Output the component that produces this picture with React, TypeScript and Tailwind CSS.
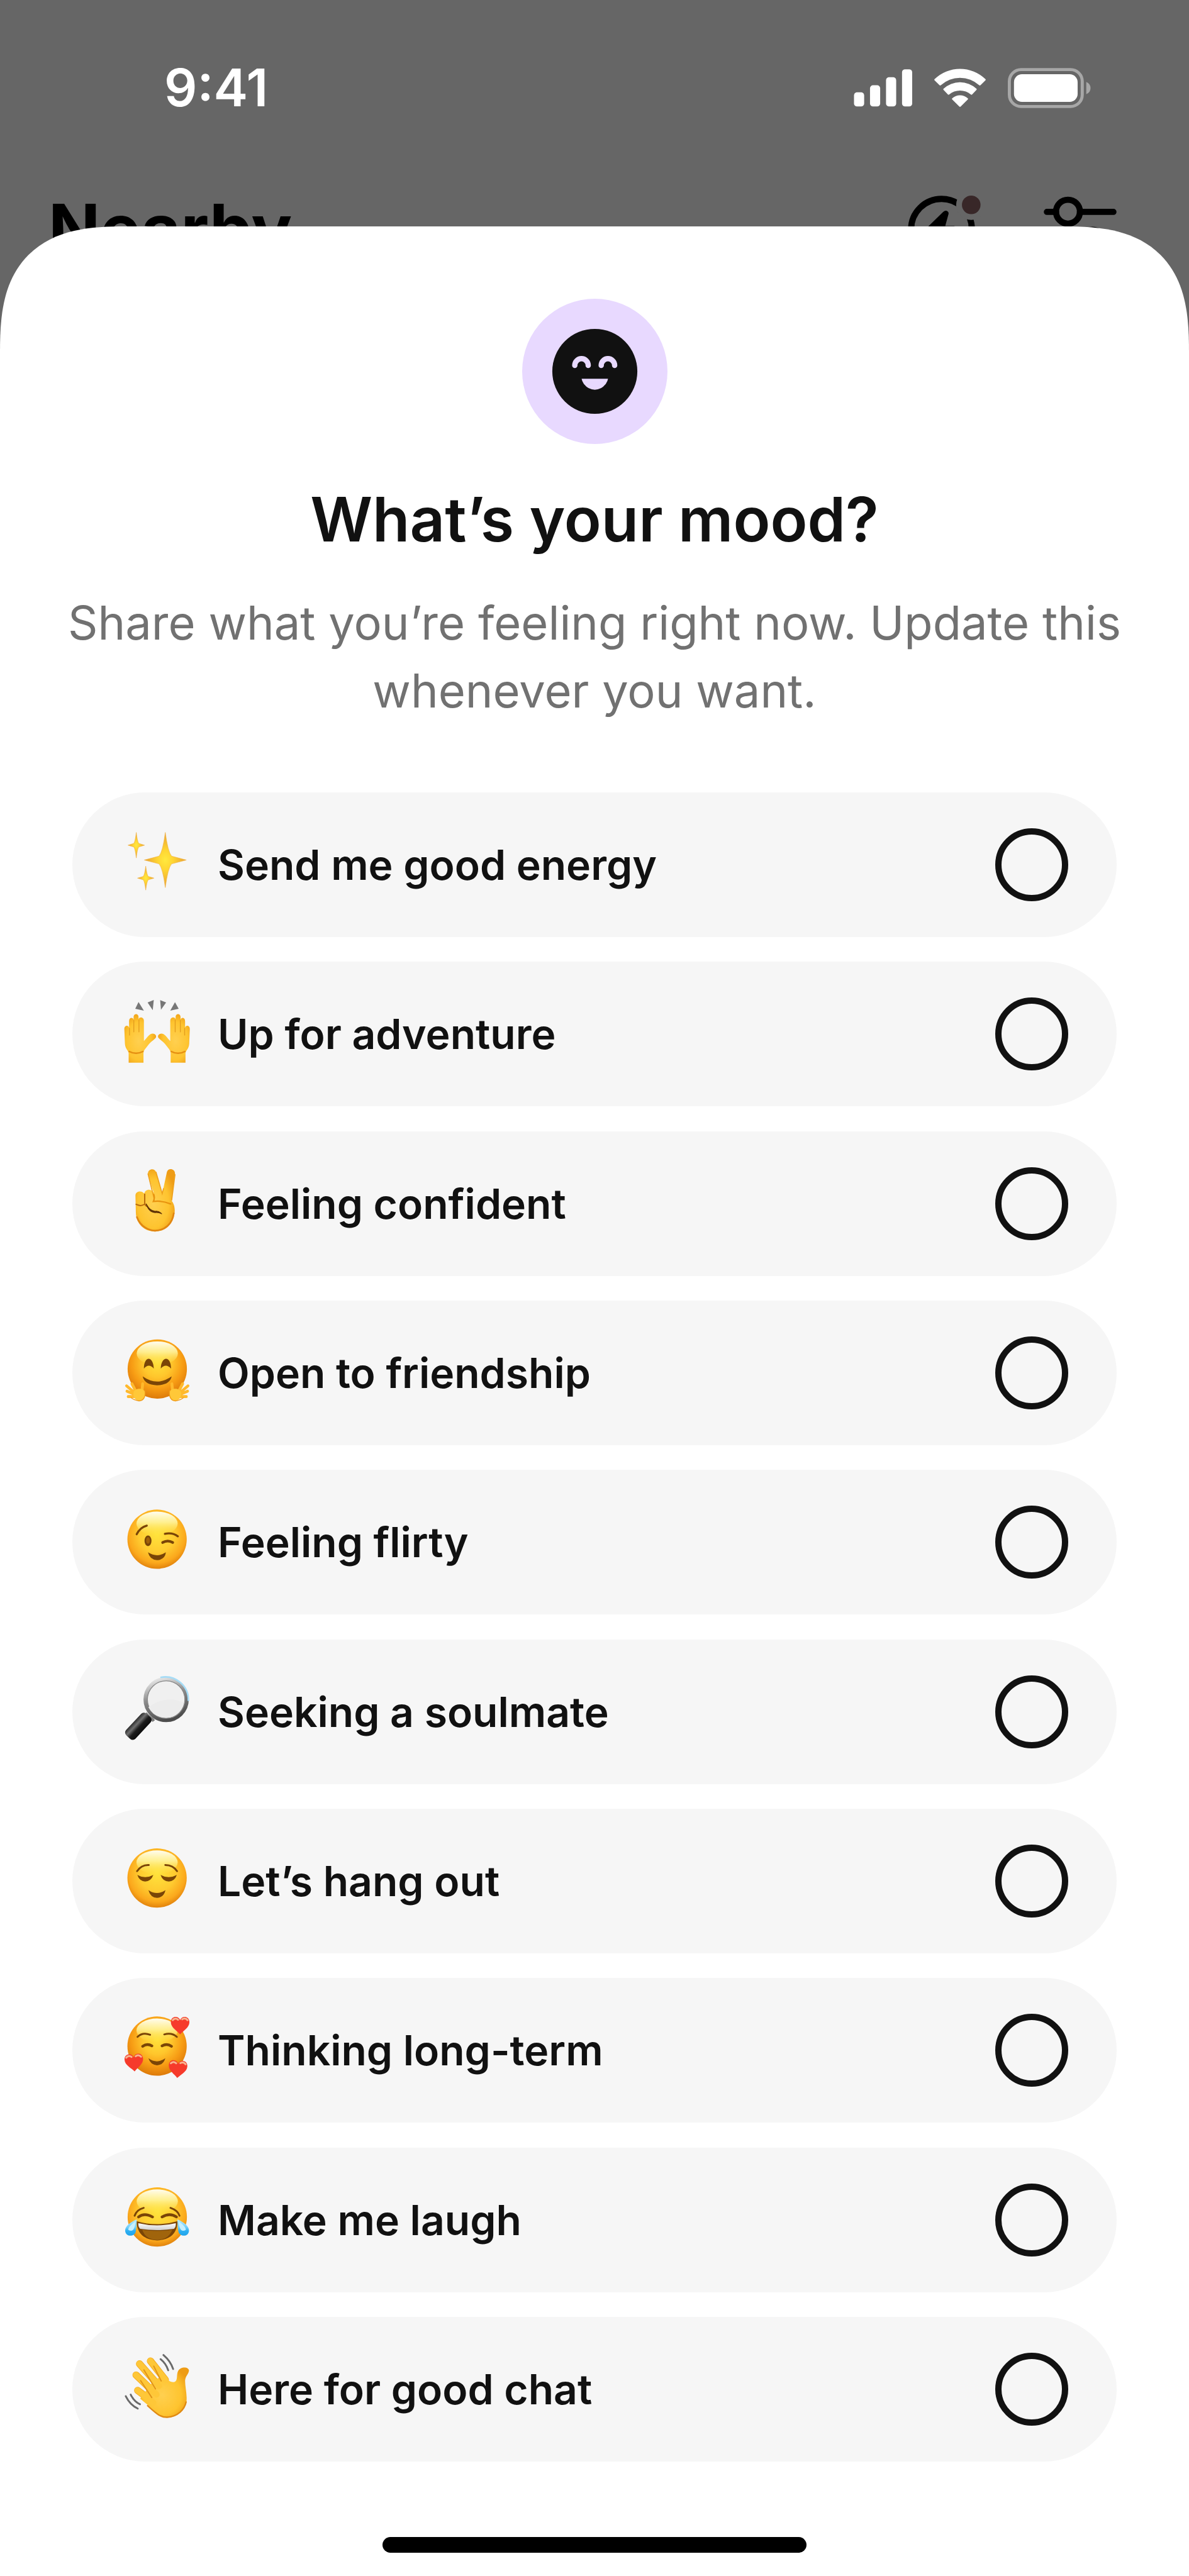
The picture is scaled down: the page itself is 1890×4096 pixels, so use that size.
import type { ReactNode } from 'react';

const BROWN = '#7a4507';

function Gradients() {
  return (
    <svg className="absolute size-0" aria-hidden="true">
      <defs>
        <radialGradient id="face" cx="0.5" cy="0.42" r="0.6">
          <stop offset="0" stopColor="#ffe33c" />
          <stop offset="0.5" stopColor="#ffcb30" />
          <stop offset="0.8" stopColor="#fba81c" />
          <stop offset="1" stopColor="#dd7c0a" />
        </radialGradient>
        <radialGradient id="faceWarm" cx="0.5" cy="0.4" r="0.6">
          <stop offset="0" stopColor="#ffe03a" />
          <stop offset="0.4" stopColor="#ffc62c" />
          <stop offset="0.72" stopColor="#f79c14" />
          <stop offset="1" stopColor="#dd7a0a" />
        </radialGradient>
        <linearGradient id="shine" x1="0" y1="0" x2="0" y2="1">
          <stop offset="0" stopColor="#fffdf0" />
          <stop offset="0.45" stopColor="#fff6a0" stopOpacity="0.85" />
          <stop offset="1" stopColor="#ffea50" stopOpacity="0" />
        </linearGradient>
        <radialGradient id="star" cx="0.5" cy="0.5" r="0.5">
          <stop offset="0" stopColor="#ffe93f" />
          <stop offset="0.35" stopColor="#ffd633" />
          <stop offset="1" stopColor="#e8a032" />
        </radialGradient>
        <radialGradient id="skin" cx="0.45" cy="0.55" r="0.6">
          <stop offset="0" stopColor="#ffd050" />
          <stop offset="0.65" stopColor="#fec42f" />
          <stop offset="1" stopColor="#ee9c16" />
        </radialGradient>
        <linearGradient id="rim" x1="0.2" y1="0" x2="0.5" y2="1">
          <stop offset="0" stopColor="#e9e9e9" />
          <stop offset="0.45" stopColor="#8c8c8c" />
          <stop offset="1" stopColor="#4c4c4c" />
        </linearGradient>
        <linearGradient id="handle" x1="0" y1="0" x2="1" y2="0">
          <stop offset="0" stopColor="#2c2c2c" />
          <stop offset="0.3" stopColor="#6f6f6f" />
          <stop offset="0.6" stopColor="#1c1c1c" />
          <stop offset="1" stopColor="#0c0c0c" />
        </linearGradient>
        <linearGradient id="tear" x1="0.5" y1="0" x2="0.5" y2="1">
          <stop offset="0" stopColor="#b9ebff" />
          <stop offset="0.5" stopColor="#6fcdfa" />
          <stop offset="0.7" stopColor="#2fb0f2" />
          <stop offset="1" stopColor="#1fa3ea" />
        </linearGradient>
        <linearGradient id="teeth" x1="0" y1="0" x2="0" y2="1">
          <stop offset="0" stopColor="#ffffff" />
          <stop offset="1" stopColor="#cfcfcf" />
        </linearGradient>
      </defs>
    </svg>
  );
}

function Emoji({ y, children }: { y: number; children: ReactNode }) {
  return (
    <svg viewBox={`58 ${y} 330 330`} className="size-[108px] shrink-0 overflow-visible" aria-hidden="true">
      {children}
    </svg>
  );
}

function Face({ cx, cy, warm }: { cx: number; cy: number; warm?: boolean }) {
  return (
    <>
      <circle cx={cx} cy={cy} r="144" fill={warm ? 'url(#faceWarm)' : 'url(#face)'} />
      <ellipse cx={cx} cy={cy - 76} rx="100" ry="58" fill="url(#shine)" />
    </>
  );
}

function Heart({ x, y, rotate }: { x: number; y: number; rotate: number }) {
  return (
    <g transform={`translate(${x} ${y}) rotate(${rotate})`}>
      <path
        d="M0 45C-14 28-45 12-45-14C-45-32-34-40-22-40C-11-40-3-34 0-24C3-34 11-40 22-40C34-40 45-32 45-14C45 12 14 28 0 45Z"
        fill="#f63a2b"
      />
      <path d="M-36-24Q-24-38-10-26M10-28Q24-38 36-24" fill="none" stroke="#f7b58f" strokeWidth="9" strokeLinecap="round" />
    </g>
  );
}

function Sparkle({ cx, cy, rx, ry }: { cx: number; cy: number; rx: number; ry: number }) {
  return (
    <path
      d={`M${cx} ${cy - ry}Q${cx + rx * 0.12} ${cy - ry * 0.3} ${cx + rx * 0.3} ${cy - ry * 0.14}L${cx + rx} ${cy}L${cx + rx * 0.3} ${cy + ry * 0.14}Q${cx + rx * 0.12} ${cy + ry * 0.3} ${cx} ${cy + ry}Q${cx - rx * 0.12} ${cy + ry * 0.3} ${cx - rx * 0.3} ${cy + ry * 0.14}L${cx - rx} ${cy}L${cx - rx * 0.3} ${cy - ry * 0.14}Q${cx - rx * 0.12} ${cy - ry * 0.3} ${cx} ${cy - ry}Z`}
      fill="url(#star)"
      stroke="#f0b040"
      strokeWidth="2"
      strokeLinejoin="round"
    />
  );
}

function RaisedHand() {
  return (
    <>
      <path
        d="M84 1252V1206C84 1194 68 1186 66 1160L63 1088C63 1068 84 1068 86 1082V1050C86 1030 106 1030 108 1044V1028C110 1012 130 1012 132 1028V1042C134 1028 156 1028 158 1046V1146C166 1140 180 1118 192 1112C208 1106 222 1118 216 1130C206 1142 190 1150 176 1170C164 1186 156 1192 156 1206V1252Z"
        fill="url(#skin)"
      />
      <path d="M88 1084V1118M109 1046V1102M134 1044V1102" fill="none" stroke="#e39c1e" strokeWidth="4" strokeLinecap="round" />
      <path d="M84 1196Q120 1216 156 1196" fill="none" stroke="#e58f12" strokeWidth="7" />
    </>
  );
}

const emoji: Record<string, ReactNode> = {
  sparkles: (
    <Emoji y={126}>
      <Sparkle cx={262} cy={268} rx={102} ry={134} />
      <Sparkle cx={121} cy={196} rx={40} ry={62} />
      <Sparkle cx={167} cy={356} rx={40} ry={58} />
    </Emoji>
  ),
  hands: (
    <Emoji y={947}>
      <path d="M132 957L158 999L116 990ZM206 947L201 997L176 959ZM237 948L266 959L241 994ZM309 958L327 990L286 999Z" fill="#777777" />
      <RaisedHand />
      <g transform="translate(444 0) scale(-1 1)">
        <RaisedHand />
      </g>
    </Emoji>
  ),
  peace: (
    <Emoji y={88}>
      <path
        d="M117 214C117 190 148 188 160 204C164 182 192 178 206 200L178 110C174 84 210 76 217 100L247 204L270 98C276 76 312 82 309 110L292 238C308 256 310 286 306 304C298 354 262 388 212 388C158 388 120 350 119 296Z"
        fill="url(#skin)"
      />
      <path d="M207 226L178 108M293 236L309 112M217 100L247 204L253 180" fill="none" stroke="#eea01c" strokeWidth="5" strokeLinecap="round" />
      <path d="M206 208Q212 226 204 242Q244 236 288 254" fill="none" stroke="#e8930f" strokeWidth="7" strokeLinecap="round" />
      <path d="M162 206V250Q164 264 176 266M120 256Q142 268 160 256" fill="none" stroke="#b86a0c" strokeWidth="6" strokeLinecap="round" />
      <path d="M169 254Q186 288 212 290Q230 286 244 302Q232 294 212 296Q182 294 169 254Z" fill="#5e3206" stroke="#5e3206" strokeWidth="4" strokeLinejoin="round" />
      <path d="M124 318C142 366 184 384 212 384C262 382 296 350 303 300" fill="none" stroke="#e08512" strokeWidth="8" strokeLinecap="round" />
    </Emoji>
  ),
  hug: (
    <Emoji y={68}>
      <Face cx={223} cy={214} warm />
      <path d="M158 212C158 148 204 148 206 212Q182 184 158 212ZM240 212C242 148 290 148 290 212Q264 184 240 212Z" fill={BROWN} />
      <path d="M152 250Q222 300 293 250Q284 292 222 293Q162 292 152 250Z" fill={BROWN} />
      {[0, 1].map((side) => (
        <g key={side} transform={side ? 'translate(446 0) scale(-1 1)' : undefined}>
          <g fill="none" stroke="#ffb92c" strokeWidth="14" strokeLinecap="round">
            <path d="M124 332L100 286M118 334L74 296M118 340L76 322M120 348L82 348M148 330L152 286" />
          </g>
          <path d="M108 326C116 304 160 306 164 328C168 356 154 372 134 368C110 364 104 342 108 326Z" fill="#ffc838" />
          <path d="M163 318C168 350 154 370 134 369Q110 366 96 354" fill="none" stroke="#f09a1a" strokeWidth="4" strokeLinecap="round" />
        </g>
      ))}
    </Emoji>
  ),
  wink: (
    <Emoji y={889}>
      <Face cx={222} cy={1040} />
      <ellipse cx="178" cy="1048" rx="17" ry="26" fill={BROWN} />
      <ellipse cx="178" cy="1046" rx="9" ry="16" fill="#a06008" />
      <g fill="none" stroke={BROWN} strokeLinecap="round">
        <path d="M123 1016Q140 982 172 974" strokeWidth="10" />
        <path d="M260 1014Q296 1006 323 1026" strokeWidth="10" />
        <path d="M249 1056Q274 1042 298 1056" strokeWidth="13" />
      </g>
      <path d="M178 1104Q222 1132 265 1104Q260 1140 222 1142Q186 1140 178 1104Z" fill={BROWN} />
    </Emoji>
  ),
  magnifier: (
    <Emoji y={90}>
      <circle cx="266" cy="195" r="100" fill="#f0f0f0" stroke="url(#rim)" strokeWidth="20" />
      <circle cx="266" cy="195" r="91" fill="none" stroke="#8a8a8a" strokeWidth="4" />
      <path d="M238 88A112 112 0 0 1 374 202" fill="none" stroke="#a6dcf6" strokeWidth="8" />
      <path d="M180 232Q266 170 352 210Q330 282 266 284Q204 282 180 232Z" fill="#ececec" />
      <path d="M166 262L182 278L200 292L206 300" stroke="#777777" strokeWidth="14" fill="none" />
      <rect x="98" y="256" width="62" height="144" rx="18" fill="url(#handle)" transform="rotate(43 134 329)" />
    </Emoji>
  ),
  relieved: (
    <Emoji y={911}>
      <Face cx={222} cy={1061} />
      <g fill="none" stroke={BROWN} strokeLinecap="round" strokeWidth="9">
        <path d="M125 1028Q146 996 182 998M262 998Q300 998 319 1028" />
      </g>
      <path d="M126 1046Q164 1068 204 1046Q192 1078 164 1078Q136 1076 126 1046ZM239 1046Q278 1068 318 1046Q308 1076 279 1078Q250 1078 239 1046Z" fill={BROWN} />
      <path d="M180 1120Q222 1148 263 1120Q254 1156 222 1158Q190 1156 180 1120Z" fill={BROWN} />
    </Emoji>
  ),
  hearts: (
    <Emoji y={112}>
      <Face cx={222} cy={257} warm />
      <g fill="none" stroke={BROWN} strokeLinecap="round">
        <path d="M127 212Q152 188 188 202M257 200Q294 190 318 212" strokeWidth="9" />
        <path d="M152 258Q174 242 197 256M246 256Q270 242 292 258" strokeWidth="13" />
      </g>
      <path d="M180 316Q222 346 262 316Q254 348 222 350Q190 348 180 316Z" fill={BROWN} />
      <Heart x={334} y={155} rotate={0} />
      <Heart x={110} y={335} rotate={-4} />
      <Heart x={323} y={367} rotate={4} />
    </Emoji>
  ),
  joy: (
    <Emoji y={92}>
      <Face cx={223} cy={242} />
      <g fill="none" stroke={BROWN} strokeLinecap="round">
        <path d="M113 236Q124 206 157 198M287 198Q322 210 331 236" strokeWidth="9" />
        <path d="M132 242Q160 220 200 242M246 242Q284 220 316 242" strokeWidth="13" />
      </g>
      <path d="M122 262Q222 292 322 262Q318 352 222 356Q126 352 122 262Z" fill={BROWN} />
      <path d="M150 304Q222 316 296 304Q278 352 222 354Q166 352 150 304Z" fill="#a0640c" />
      <path d="M131 272Q222 294 313 272Q314 292 304 300Q222 312 140 300Q130 292 131 272Z" fill="url(#teeth)" />
      <path d="M123 254C94 266 67 286 67 308C68 340 112 340 118 314Q124 286 123 254ZM321 254C350 266 377 286 377 308C376 340 334 340 326 314Q320 286 321 254Z" fill="url(#tear)" />
      <path d="M118 262C100 276 84 288 82 304Q96 314 106 304Q116 290 118 262ZM326 262C344 276 360 288 362 304Q348 314 338 304Q328 290 326 262Z" fill="#c6effd" />
    </Emoji>
  ),
  wave: (
    <Emoji y={913}>
      <g fill="none" stroke="#f4ab22" strokeWidth="35" strokeLinecap="round">
        <path d="M190 941L262 1032M137 955L228 1058M120 1009L214 1100M128 1084L200 1138" />
      </g>
      <path
        d="M200 1044L250 1008C268 1030 284 1044 302 1044C326 1040 314 1010 324 990C336 968 372 968 377 986C376 1004 360 1012 358 1036C358 1068 368 1100 365 1136C358 1176 322 1216 270 1216C240 1214 226 1200 190 1166L140 1124Z"
        fill="url(#skin)"
      />
      <g fill="none" stroke="#fec738" strokeWidth="29" strokeLinecap="round">
        <path d="M189 940L262 1032M136 954L232 1062M119 1008L220 1104M127 1083L204 1144" />
      </g>
      <path d="M206 966L242 1038M158 984L214 1076M142 1036L196 1118" fill="none" stroke="#e0931a" strokeWidth="6" strokeLinecap="round" />
      <path d="M176 1158C226 1204 240 1214 270 1214C322 1212 356 1176 363 1140" fill="none" stroke="#e08a12" strokeWidth="7" strokeLinecap="round" />
      <g fill="none" stroke="#6a6a6a" strokeWidth="9" strokeLinecap="round">
        <path d="M253 912Q288 942 300 980M239 932Q266 954 276 986M70 1112Q90 1154 128 1172M94 1104Q110 1138 139 1151" />
      </g>
    </Emoji>
  ),
};

const moods = [
  { id: 'energy', icon: 'sparkles', label: 'Send me good energy' },
  { id: 'adventure', icon: 'hands', label: 'Up for adventure' },
  { id: 'confident', icon: 'peace', label: 'Feeling confident' },
  { id: 'friendship', icon: 'hug', label: 'Open to friendship' },
  { id: 'flirty', icon: 'wink', label: 'Feeling flirty' },
  { id: 'soulmate', icon: 'magnifier', label: 'Seeking a soulmate' },
  { id: 'hangout', icon: 'relieved', label: 'Let’s hang out' },
  { id: 'longterm', icon: 'hearts', label: 'Thinking long-term' },
  { id: 'laugh', icon: 'joy', label: 'Make me laugh' },
  { id: 'chat', icon: 'wave', label: 'Here for good chat' },
];

function StatusBar() {
  return (
    <div className="flex h-[280px] items-center justify-between pr-[156px] pl-[261px] text-white">
      <span className="text-[82px] leading-none font-semibold">9:41</span>
      <div className="flex items-center gap-[35px]">
        <svg viewBox="417 110 95 65" className="h-16 w-[93px]" fill="currentColor" aria-label="Signal">
          <rect x="417.5" y="149.5" width="16.5" height="23" rx="5" />
          <rect x="443.5" y="138" width="16.5" height="34.5" rx="5" />
          <rect x="469.5" y="125" width="16.5" height="47.5" rx="5" />
          <rect x="495.5" y="112" width="16.5" height="60.5" rx="5" />
        </svg>
        <svg viewBox="548 110 83 65" className="h-16 w-[82px]" fill="currentColor" aria-label="Wi-Fi">
          <path d="M548.5 130Q547.5 129 548.5 128A59 59 0 0 1 630.5 128Q631.5 129 630.5 130L622.5 138Q621.5 139 620.5 138A46 46 0 0 0 558.5 138Q557.5 139 556.5 138Z" />
          <path d="M563 145.500Q562 144.500 563 143.500A39 39 0 0 1 616 143.500Q617 144.500 616 145.500L609 153Q608 154 607 153A27 27 0 0 0 572 153Q571 154 570 153Z" />
          <path d="M577 161Q576 160 577 159A18.500 18.500 0 0 1 602 159Q603 160 602 161L590.500 172.500Q589.500 173.300 588.500 172.500Z" />
        </svg>
        <svg viewBox="666.500 110 135 65" className="h-16 w-[132px]" aria-label="Battery">
          <rect x="669" y="112.500" width="118.500" height="60" rx="19" fill="none" stroke="#a7a7a7" strokeWidth="5" />
          <rect x="676.500" y="120" width="103.500" height="45" rx="13" fill="currentColor" />
          <path d="M794 132.500Q801 135.500 801 142.500Q801 149.500 794 152.500Z" fill="#a7a7a7" />
        </svg>
      </div>
    </div>
  );
}

function NearbyHeader() {
  return (
    <div className="flex h-[168px] items-center justify-between pr-[115px] pl-[77px] text-black">
      <h2 className="text-[108px] leading-none font-bold">Nearby</h2>
      <div className="flex items-center gap-[100px]">
        <button type="button" aria-label="Boost">
          <svg viewBox="77 77 353 326" className="h-[107px] w-[116px]">
            <circle cx="240" cy="240" r="147" fill="none" stroke="#000" strokeWidth="30" />
            <circle cx="384" cy="122" r="73" fill="#666666" />
            <path d="M248 156Q260 146 270 154Q277 160 273 170L258 225H300Q308 226 304 234L232 324Q216 334 212 316L226 256H166Q154 250 162 240Z" fill="#000" />
            <circle cx="384" cy="122" r="45" fill="#382728" />
          </svg>
        </button>
        <button type="button" aria-label="Filters">
          <svg viewBox="737 77 352 326" className="h-[107px] w-[116px]" fill="none" stroke="#000" strokeWidth="30" strokeLinecap="round">
            <path d="M752 156H796M912 156H1074M752 301H914M1030 301H1074" />
            <circle cx="854" cy="155" r="58" />
            <circle cx="972" cy="301" r="58" />
          </svg>
        </button>
      </div>
    </div>
  );
}

export default function App() {
  return (
    <div className="flex min-h-screen flex-col bg-[#666666] font-['Inter',sans-serif]">
      <Gradients />
      <StatusBar />
      <NearbyHeader />
      <main className="relative -mt-[88px] flex flex-1 flex-col items-center rounded-t-[153px] bg-white pt-[115px] text-[#111111] supports-[corner-shape:squircle]:rounded-t-[200px] supports-[corner-shape:squircle]:[corner-shape:superellipse(1.43)]">
        <svg viewBox="131 99 704 704" className="size-[231px]" aria-hidden="true">
          <circle cx="483" cy="451" r="352" fill="#e8d9ff" />
          <circle cx="483" cy="451" r="206" fill="#111111" />
          <path d="M386 422A32 32 0 0 1 451 422M514 422A32 32 0 0 1 579 422" fill="none" stroke="#e8d9ff" strokeWidth="26" strokeLinecap="round" />
          <path d="M419 487H547Q545 500 536 512Q514 540 483 540Q452 540 430 512Q421 500 419 487Z" fill="#e8d9ff" />
        </svg>
        <h1 className="mt-[62px] text-[97px] leading-[116px] font-semibold">What’s your mood?</h1>
        <p className="mt-[52px] px-[100px] text-center text-[74px] leading-[108px] text-[#717171]">
          Share what you’re feeling right now. Update this whenever you want.
        </p>
        <div role="radiogroup" aria-label="Mood" className="mt-[108px] flex w-full flex-1 flex-col justify-between gap-[39px] px-[115px]">
          {moods.map((mood) => (
            <label key={mood.id} htmlFor={mood.id} className="flex h-[230px] items-center rounded-full bg-[#f6f6f6] pr-[77px] pl-[81px]">
              {emoji[mood.icon]}
              <span className="ml-[42px] flex-1 text-[66px] leading-[80px] font-semibold">{mood.label}</span>
              <input
                id={mood.id}
                type="radio"
                name="mood"
                className="size-[116px] appearance-none rounded-full border-[10px] border-[#111111] checked:bg-[#111111]"
              />
            </label>
          ))}
        </div>
        <div className="mt-[120px] mb-[37px] h-[25px] w-[674px] rounded-full bg-black" />
      </main>
    </div>
  );
}
